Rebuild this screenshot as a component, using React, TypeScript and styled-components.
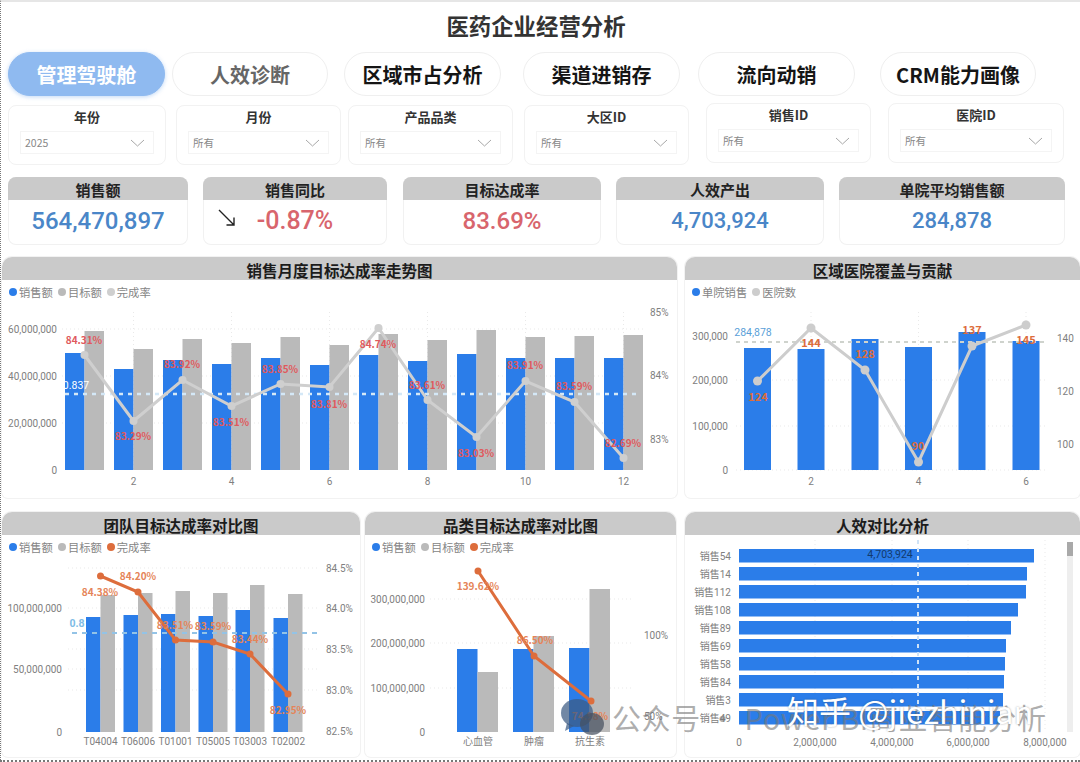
import React from "react";
import styled, { createGlobalStyle } from "styled-components";

const Global = createGlobalStyle`
  html, body { margin: 0; padding: 0; background: #fff; }
  body { font-family: "Noto Sans CJK SC", "Noto Sans", Roboto, sans-serif; }
  * { box-sizing: border-box; }
`;

const Page = styled.div`
  position: relative;
  width: 1080px;
  height: 762px;
  overflow: hidden;
  background: #fff;
  border-top: 2px solid #e6e6e6;
  border-left: 1px dotted #777;
  border-bottom: 2px dotted #777;
`;
const Title = styled.h1`
  margin: 0;
  height: 50px;
  padding-top: 5px;
  font-size: 22.4px;
  line-height: 36px;
  font-weight: 700;
  color: #333;
  text-align: center;
  margin-left: -9px;
`;
const Nav = styled.nav`
  display: flex;
  height: 44px;
  padding-left: 7px;
`;
const Pill = styled.div<{ $w: number; $ml: number; $active?: boolean; $dim?: boolean }>`
  width: ${(p) => p.$w}px;
  margin-left: ${(p) => p.$ml}px;
  height: 44px;
  border-radius: 22px;
  display: flex;
  align-items: center;
  justify-content: center;
  font-size: 20px;
  font-weight: 700;
  color: ${(p) => (p.$active ? "#fff" : p.$dim ? "#666" : "#151515")};
  background: ${(p) => (p.$active ? "#8fbaf0" : "#fff")};
  border: 1px solid ${(p) => (p.$active ? "#8fbaf0" : "#efefef")};
  box-shadow: ${(p) => (p.$active ? "0 1px 4px rgba(120,170,235,.45)" : "none")};
`;
const Filters = styled.div`
  display: flex;
  align-items: flex-start;
  height: 62px;
  margin-top: 7px;
  padding-left: 7px;
`;
const FilterCard = styled.div<{ $w: number; $ml: number; $mt: number }>`
  width: ${(p) => p.$w}px;
  height: 60px;
  margin-left: ${(p) => p.$ml}px;
  margin-top: ${(p) => p.$mt}px;
  padding: 1px 11px 0;
  border: 1px solid #f2f2f2;
  border-radius: 8px;
`;
const FilterLabel = styled.div`
  height: 22px;
  font-size: 13px;
  line-height: 20px;
  font-weight: 700;
  color: #333;
  text-align: center;
`;
const Select = styled.div`
  height: 23px;
  margin-top: 2px;
  padding: 0 8px 0 4px;
  display: flex;
  align-items: center;
  justify-content: space-between;
  border: 1px solid #f4f4f4;
  font-size: 10.5px;
  color: #888;
`;
const Kpis = styled.div`
  display: flex;
  height: 68px;
  margin-top: 12px;
  padding-left: 7px;
`;
const Kpi = styled.div<{ $w: number; $ml: number }>`
  position: relative;
  width: ${(p) => p.$w}px;
  margin-left: ${(p) => p.$ml}px;
  border-radius: 8px;
  overflow: hidden;
  box-shadow: inset 0 0 0 1px #f1f1f1;
  display: flex;
  flex-direction: column;
`;
const KpiHead = styled.div`
  height: 23px;
  background: #cacaca;
  font-size: 15px;
  line-height: 26px;
  font-weight: 700;
  color: #222;
  text-align: center;
`;
const KpiBody = styled.div`
  flex: 1;
  display: flex;
  align-items: center;
  justify-content: center;
  padding-bottom: 4px;
`;
const KpiValue = styled.div<{ $red?: boolean; $s?: number }>`
  font-family: Roboto, sans-serif;
  font-size: ${(p) => p.$s ?? 24}px;
  font-weight: 500;
  color: ${(p) => (p.$red ? "#d8656d" : "#4a86c8")};
`;
const KpiArrow = styled.svg`
  position: absolute;
  left: 14px;
  top: 31px;
`;
const ChartRow = styled.div<{ $mt: number; $h: number }>`
  display: flex;
  height: ${(p) => p.$h}px;
  margin-top: ${(p) => p.$mt}px;
  padding-left: 1px;
`;
const Panel = styled.section<{ $w: number; $ml: number }>`
  width: ${(p) => p.$w}px;
  margin-left: ${(p) => p.$ml}px;
  flex: none;
  display: flex;
  flex-direction: column;
  border-radius: 10px 10px 6px 6px;
  box-shadow: 0 0 0 1px #f2f2f2;
  overflow: hidden;
`;
const PanelHead = styled.h2`
  margin: 0;
  height: 23px;
  flex: none;
  background: #cacaca;
  font-size: 15.5px;
  line-height: 27px;
  font-weight: 700;
  color: #1c1c1c;
  text-align: center;
`;
const Legend = styled.div`
  height: 26px;
  flex: none;
  padding: 0 0 2px 7px;
  display: flex;
  align-items: center;
  gap: 5px;
  font-size: 11.3px;
  color: #858585;
`;
const LegendItem = styled.span`
  display: flex;
  align-items: center;
  gap: 2px;
`;
const Dot = styled.i<{ $c: string }>`
  width: 8px;
  height: 8px;
  border-radius: 50%;
  background: ${(p) => p.$c};
`;
const Plot = styled.svg`
  display: block;
  flex: 1;
  min-height: 0;
  width: 100%;
`;
const AxisText = styled.text`
  font-family: Roboto, "Noto Sans CJK SC", sans-serif;
  font-size: 10px;
  fill: #808080;
`;
const ValueText = styled.text<{ $c: string; $s?: number }>`
  font-size: ${(p) => p.$s ?? 10}px;
  font-weight: 700;
  fill: ${(p) => p.$c};
  text-anchor: middle;
`;
const RefText = styled.text<{ $c: string; $w?: number }>`
  font-family: Roboto, sans-serif;
  font-size: 10.5px;
  font-weight: ${(p) => p.$w ?? 400};
  fill: ${(p) => p.$c};
  text-anchor: middle;
`;
const Watermark = styled.div`
  position: absolute;
  left: 611px;
  top: 695px;
  font-size: 29px;
  line-height: 40px;
  letter-spacing: 0.6px;
  white-space: nowrap;
  color: rgba(120, 120, 120, 0.6);
`;
const Zhihu = styled.div`
  position: absolute;
  left: 786px;
  top: 688px;
  font-size: 32px;
  line-height: 40px;
  white-space: nowrap;
  color: #fff;
  text-shadow: 0 0 2px rgba(60, 60, 60, 0.45);
`;
const WeChat = styled.svg`
  position: absolute;
  left: 558px;
  top: 696px;
`;

const BLUE = "#2b7de9";
const GREY = "#bababa";
const ORANGE = "#dd6d3c";
const RED = "#e0595d";

const Chevron = () => (
  <svg width="15" height="8" viewBox="0 0 15 8" fill="none" stroke="#a8a8a8" strokeWidth="1">
    <path d="M1 1l6.5 6L14 1" />
  </svg>
);

const Line = ({ xs, ys, c, w, r }: { xs: number[]; ys: number[]; c: string; w: number; r: number }) => (
  <g>
    <polyline points={xs.map((x, i) => `${x},${ys[i]}`).join(" ")} fill="none" stroke={c} strokeWidth={w} />
    {xs.map((x, i) => (
      <circle key={i} cx={x} cy={ys[i]} r={r} fill={c} />
    ))}
  </g>
);

const GridH = ({ x1, x2, ys }: { x1: number; x2: number; ys: number[] }) => (
  <g stroke="#e9e9e9" strokeDasharray="1 3">
    {ys.map((y) => (
      <line key={y} x1={x1} x2={x2} y1={y} y2={y} />
    ))}
  </g>
);
const GridV = ({ y1, y2, xs }: { y1: number; y2: number; xs: number[] }) => (
  <g stroke="#e9e9e9" strokeDasharray="1 3">
    {xs.map((x) => (
      <line key={x} x1={x} x2={x} y1={y1} y2={y2} />
    ))}
  </g>
);

const Bars = ({ xs, tops, w, base, c }: { xs: number[]; tops: number[]; w: number; base: number; c: string }) => (
  <g fill={c}>
    {xs.map((x, i) => (
      <rect key={i} x={x} y={tops[i]} width={w} height={base - tops[i]} />
    ))}
  </g>
);

const Left = ({ x, items }: { x: number; items: [string, number][] }) => (
  <g>
    {items.map(([t, y]) => (
      <AxisText key={t} x={x} y={y + 4} textAnchor="end">
        {t}
      </AxisText>
    ))}
  </g>
);
const RightAxis = ({ x, items }: { x: number; items: [string, number][] }) => (
  <g>
    {items.map(([t, y]) => (
      <AxisText key={t} x={x} y={y + 4}>
        {t}
      </AxisText>
    ))}
  </g>
);
const Bottom = ({ y, items }: { y: number; items: [string, number][] }) => (
  <g>
    {items.map(([t, x]) => (
      <AxisText key={t} x={x} y={y + 4} textAnchor="middle">
        {t}
      </AxisText>
    ))}
  </g>
);

const Labels = ({ items, c, s }: { items: [string, number, number][]; c: string; s?: number }) => (
  <g>
    {items.map(([t, x, y]) => (
      <ValueText key={t + x} x={x} y={y + 4} $c={c} $s={s}>
        {t}
      </ValueText>
    ))}
  </g>
);

const LegendRow = ({ items }: { items: [string, string][] }) => (
  <Legend>
    {items.map(([t, c]) => (
      <LegendItem key={t}>
        <Dot $c={c} />
        {t}
      </LegendItem>
    ))}
  </Legend>
);

/* chart 1 */
const m1 = Array.from({ length: 12 }, (_, i) => 84.5 + i * 49);
const Chart1 = () => (
  <Plot viewBox="2 306 675 192" preserveAspectRatio="none">
    <GridH x1={62} x2={645} ys={[329, 376, 423]} />
    <GridV y1={312} y2={470} xs={[133.5, 231.5, 329.5, 427.5, 525.5, 623.5]} />
    <Bars xs={m1.map((x) => x - 19.5)} tops={[353, 369, 360, 364, 358, 365, 355, 361, 354, 358, 358, 358]} w={19.5} base={470} c={BLUE} />
    <Bars xs={m1} tops={[331, 349, 339, 343, 337, 345, 334, 340, 330, 337, 336, 335]} w={19.5} base={470} c={GREY} />
    <line x1={65} x2={640} y1={394} y2={394} stroke="#d4e8f7" strokeWidth={2.5} strokeDasharray="4 5" />
    <Line xs={m1} ys={[355, 421, 380, 406, 384, 387, 328, 400, 437, 381, 402, 458]} c="#cfcfcf" w={3} r={4} />
    <Left x={57} items={[["60,000,000", 329], ["40,000,000", 376], ["20,000,000", 423], ["0", 470]]} />
    <RightAxis x={650} items={[["85%", 312], ["84%", 375], ["83%", 439]]} />
    <Bottom y={481} items={[["2", 133.5], ["4", 231.5], ["6", 329.5], ["8", 427.5], ["10", 525.5], ["12", 623.5]]} />
    <RefText x={76} y={389} $c="#fff">0.837</RefText>
    <Labels
      c={RED}
      items={[
        ["84.31%", 84, 340], ["83.29%", 133, 436], ["83.92%", 182, 364], ["83.51%", 231, 422],
        ["83.85%", 280, 369], ["83.81%", 329, 404], ["84.74%", 378, 344], ["83.61%", 427, 385],
        ["83.03%", 476, 453], ["83.91%", 525, 365], ["83.59%", 574, 386], ["82.69%", 623, 443],
      ]}
    />
  </Plot>
);

/* chart 2 */
const m2 = [757.5, 811, 865, 918.5, 972, 1026];
const Chart2 = () => (
  <Plot viewBox="685 306 395 192" preserveAspectRatio="none">
    <GridH x1={736} x2={1045} ys={[380, 426, 470]} />
    <GridV y1={312} y2={470} xs={[811, 918.5, 1026]} />
    <Bars xs={m2.map((x) => x - 13.5)} tops={[348, 349, 339, 347, 332, 341]} w={27} base={470} c={BLUE} />
    <line x1={736} x2={1045} y1={342} y2={342} stroke="#cfd3cd" strokeWidth={2} strokeDasharray="4 4" />
    <Line xs={m2} ys={[381, 328, 370, 462, 346, 325]} c="#cdcdcd" w={3} r={4.5} />
    <Left x={728} items={[["300,000", 336], ["200,000", 380], ["100,000", 426], ["0", 470]]} />
    <RightAxis x={1057} items={[["140", 338], ["120", 391], ["100", 444]]} />
    <Bottom y={481} items={[["2", 811], ["4", 918.5], ["6", 1026]]} />
    <RefText x={753} y={336} $c="#5a9fd8">284,878</RefText>
    <Labels c={ORANGE} s={11} items={[["124", 758, 397], ["144", 811, 343], ["128", 865, 354], ["90", 918, 446], ["137", 972, 330], ["145", 1026, 340]]} />
  </Plot>
);

/* chart 3 */
const m3 = [100.5, 138, 175.5, 213, 250, 288];
const Chart3 = () => (
  <Plot viewBox="2 561 358 196" preserveAspectRatio="none">
    <GridH x1={68} x2={320} ys={[568, 608, 649, 669, 690]} />
    <Bars xs={m3.map((x) => x - 14.5)} tops={[617, 615, 614, 616, 610, 618]} w={14.5} base={732} c={BLUE} />
    <Bars xs={m3} tops={[595, 593, 591, 593, 585, 594]} w={14.5} base={732} c={GREY} />
    <line x1={72} x2={320} y1={633} y2={633} stroke="#93c3e6" strokeWidth={2} strokeDasharray="5 5" />
    <Line xs={m3} ys={[576, 592, 640, 642, 654, 694]} c={ORANGE} w={3} r={3.5} />
    <Left x={62} items={[["100,000,000", 608], ["50,000,000", 669], ["0", 732]]} />
    <RightAxis x={326} items={[["84.5%", 568], ["84.0%", 608], ["83.5%", 649], ["83.0%", 690], ["82.5%", 731]]} />
    <Bottom y={741} items={[["T04004", 100.5], ["T06006", 138], ["T01001", 175.5], ["T05005", 213], ["T03003", 250], ["T02002", 288]]} />
    <RefText x={77} y={627} $c="#7ebce6" $w={700}>0.8</RefText>
    <Labels
      c="#e58458"
      items={[["84.38%", 100, 592], ["84.20%", 138, 576], ["83.51%", 175, 625], ["83.59%", 213, 626], ["83.44%", 250, 639], ["82.95%", 288, 710]]}
    />
  </Plot>
);

/* chart 4 */
const m4 = [477.5, 533.5, 589.5];
const Chart4 = () => (
  <Plot viewBox="365 561 311 196" preserveAspectRatio="none">
    <GridH x1={430} x2={632} ys={[599, 643, 688]} />
    <Bars xs={m4.map((x) => x - 20.5)} tops={[649, 649, 648]} w={20.5} base={732} c={BLUE} />
    <Bars xs={m4} tops={[672, 636, 589]} w={20.5} base={732} c={GREY} />
    <Line xs={[478, 534, 591]} ys={[571, 656, 701]} c={ORANGE} w={3} r={3.5} />
    <Left x={425} items={[["300,000,000", 599], ["200,000,000", 643], ["100,000,000", 688], ["0", 732]]} />
    <RightAxis x={644} items={[["100%", 635], ["50%", 716]]} />
    <Bottom y={741} items={[["心血管", 478], ["肿瘤", 534], ["抗生素", 590]]} />
    <Labels c="#e58458" items={[["139.62%", 478, 586], ["86.50%", 535, 640], ["74.98%", 590, 716]]} />
  </Plot>
);

/* chart 5 */
const reps: [string, number][] = [
  ["销售54", 1034], ["销售14", 1027], ["销售112", 1026], ["销售108", 1018], ["销售89", 1011],
  ["销售69", 1006], ["销售58", 1005], ["销售84", 1004], ["销售3", 1003], ["销售49", 1000],
];
const Chart5 = () => (
  <Plot viewBox="685 535 395 222" preserveAspectRatio="none">
    <GridV y1={540} y2={732} xs={[815, 892, 968, 1045]} />
    <g fill={BLUE}>
      {reps.map(([, end], i) => (
        <rect key={i} x={739} y={549 + i * 18} width={end - 739} height={13.5} />
      ))}
    </g>
    <line x1={918} x2={918} y1={540} y2={732} stroke="#cfe2f6" strokeWidth={2} strokeDasharray="4 4" />
    <Left x={731} items={reps.map(([t], i): [string, number] => [t, 555.5 + i * 18])} />
    <Bottom y={742} items={[["0", 739], ["2,000,000", 815], ["4,000,000", 892], ["6,000,000", 968], ["8,000,000", 1045]]} />
    <RefText x={890} y={558} $c="#123a6e">4,703,924</RefText>
    <rect x={1067} y={542} width={6} height={190} fill="#eeeeee" />
    <rect x={1067} y={542} width={6} height={14} fill="#a9a9a9" />
  </Plot>
);

const pills = [
  { t: "管理驾驶舱", w: 157, ml: 0, active: true },
  { t: "人效诊断", w: 156, ml: 7, dim: true },
  { t: "区域市占分析", w: 157, ml: 16 },
  { t: "渠道进销存", w: 157, ml: 22 },
  { t: "流向动销", w: 157, ml: 18 },
  { t: "CRM能力画像", w: 156, ml: 25 },
];
const filters = [
  { l: "年份", v: "2025", w: 158, ml: 0, mt: 2 },
  { l: "月份", v: "所有", w: 165, ml: 10, mt: 2 },
  { l: "产品品类", v: "所有", w: 165, ml: 7, mt: 2 },
  { l: "大区ID", v: "所有", w: 165, ml: 11, mt: 2 },
  { l: "销售ID", v: "所有", w: 165, ml: 17, mt: 0 },
  { l: "医院ID", v: "所有", w: 176, ml: 17, mt: 0 },
];

export default function App() {
  return (
    <Page>
      <Global />
      <Title>医药企业经营分析</Title>
      <Nav>
        {pills.map((p) => (
          <Pill key={p.t} $w={p.w} $ml={p.ml} $active={p.active} $dim={p.dim}>
            {p.t}
          </Pill>
        ))}
      </Nav>
      <Filters>
        {filters.map((f) => (
          <FilterCard key={f.l} $w={f.w} $ml={f.ml} $mt={f.mt}>
            <FilterLabel>{f.l}</FilterLabel>
            <Select>
              {f.v}
              <Chevron />
            </Select>
          </FilterCard>
        ))}
      </Filters>
      <Kpis>
        <Kpi $w={180} $ml={0}>
          <KpiHead>销售额</KpiHead>
          <KpiBody>
            <KpiValue>564,470,897</KpiValue>
          </KpiBody>
        </Kpi>
        <Kpi $w={184} $ml={15}>
          <KpiHead>销售同比</KpiHead>
          <KpiBody>
            <KpiValue $red $s={25}>-0.87%</KpiValue>
          </KpiBody>
          <KpiArrow width="20" height="20" viewBox="0 0 20 20" fill="none" stroke="#222" strokeWidth="1.4">
            <path d="M2 2l15 15M17 9.5V17H9.5" />
          </KpiArrow>
        </Kpi>
        <Kpi $w={198} $ml={16}>
          <KpiHead>目标达成率</KpiHead>
          <KpiBody>
            <KpiValue $red>83.69%</KpiValue>
          </KpiBody>
        </Kpi>
        <Kpi $w={208} $ml={15}>
          <KpiHead>人效产出</KpiHead>
          <KpiBody>
            <KpiValue $s={22}>4,703,924</KpiValue>
          </KpiBody>
        </Kpi>
        <Kpi $w={226} $ml={15}>
          <KpiHead>单院平均销售额</KpiHead>
          <KpiBody>
            <KpiValue $s={22}>284,878</KpiValue>
          </KpiBody>
        </Kpi>
      </Kpis>
      <ChartRow $mt={12} $h={241}>
        <Panel $w={675} $ml={0}>
          <PanelHead>销售月度目标达成率走势图</PanelHead>
          <LegendRow items={[["销售额", BLUE], ["目标额", GREY], ["完成率", "#cfcfcf"]]} />
          <Chart1 />
        </Panel>
        <Panel $w={395} $ml={8}>
          <PanelHead>区域医院覆盖与贡献</PanelHead>
          <LegendRow items={[["单院销售", BLUE], ["医院数", "#cdcdcd"]]} />
          <Chart2 />
        </Panel>
      </ChartRow>
      <ChartRow $mt={14} $h={245}>
        <Panel $w={358} $ml={0}>
          <PanelHead>团队目标达成率对比图</PanelHead>
          <LegendRow items={[["销售额", BLUE], ["目标额", GREY], ["完成率", ORANGE]]} />
          <Chart3 />
        </Panel>
        <Panel $w={311} $ml={5}>
          <PanelHead>品类目标达成率对比图</PanelHead>
          <LegendRow items={[["销售额", BLUE], ["目标额", GREY], ["完成率", ORANGE]]} />
          <Chart4 />
        </Panel>
        <Panel $w={395} $ml={9}>
          <PanelHead>人效对比分析</PanelHead>
          <Chart5 />
        </Panel>
      </ChartRow>
      <WeChat width="48" height="40" viewBox="0 0 48 40">
        <ellipse cx="18" cy="15" rx="16" ry="14" fill="rgba(60,90,130,.72)" />
        <path d="M8 25l-2 8 9-5z" fill="rgba(60,90,130,.72)" />
        <ellipse cx="33" cy="26" rx="12" ry="11" fill="rgba(70,80,95,.72)" />
      </WeChat>
      <Watermark>公众号 · Power BI商业智能分析</Watermark>
      <Zhihu>知乎 @jiezhinian</Zhihu>
    </Page>
  );
}
